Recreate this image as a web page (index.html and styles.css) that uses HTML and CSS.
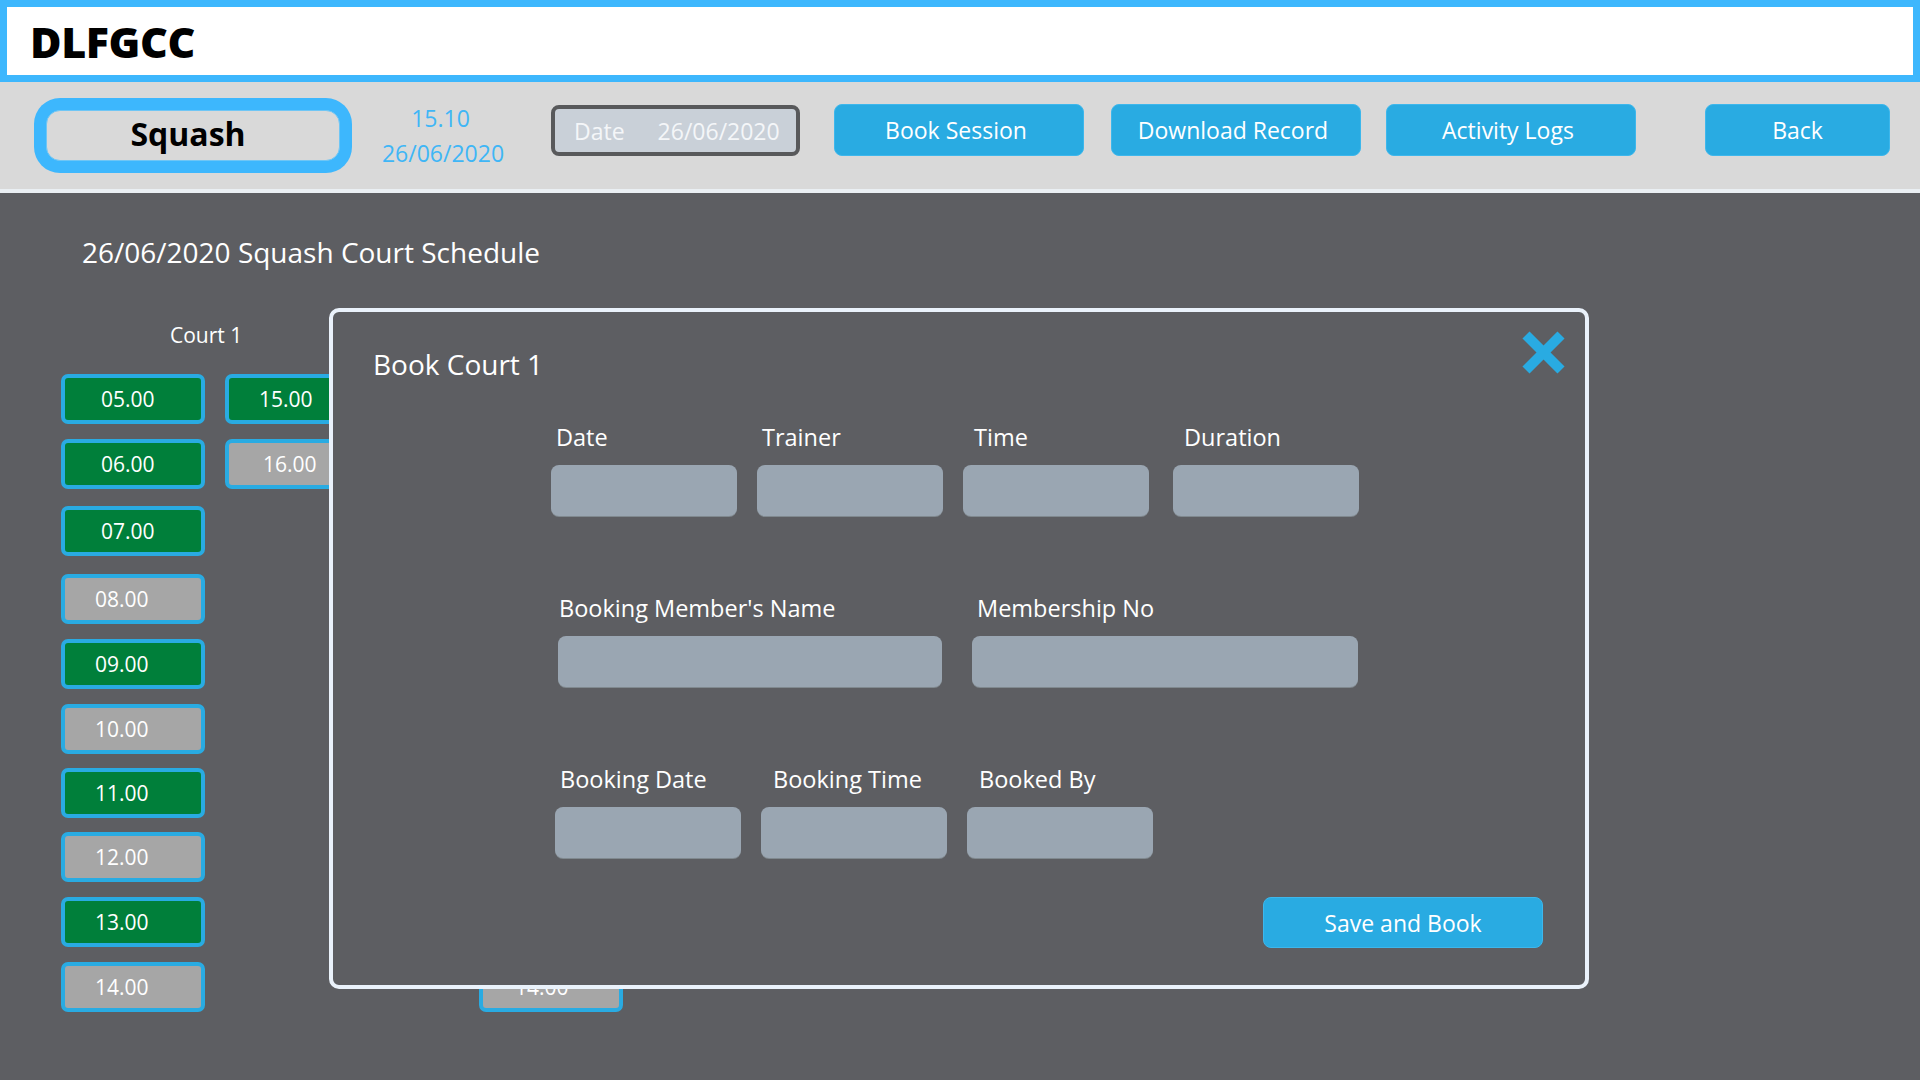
FILE: index.html
```html
<!DOCTYPE html>
<html lang="en">
<head>
<meta charset="utf-8">
<title>DLFGCC - Squash Court Schedule</title>
<link rel="stylesheet" href="styles.css">
</head>
<body>
<header class="topbar">
  <h1 class="brand">DLFGCC</h1>
</header>
<nav class="toolbar">
  <div class="sport"><div class="sport-inner">Squash</div></div>
  <div class="clock"><div class="clock-time">15.10</div><div>26/06/2020</div></div>
  <div class="datebox"><span class="date-label">Date</span><span class="date-value">26/06/2020</span></div>
  <button class="btn btn-book">Book Session</button>
  <button class="btn btn-download">Download Record</button>
  <button class="btn btn-logs">Activity Logs</button>
  <button class="btn btn-back">Back</button>
</nav>
<main class="main">
  <h2 class="schedule-title">26/06/2020 Squash Court Schedule</h2>
  <div class="courts">
    <section class="court">
      <div class="court-name">Court 1</div>
      <div class="court-cols">
        <div class="slot-col">
          <div class="slot free indent-lg">05.00</div>
          <div class="slot free indent-lg">06.00</div>
          <div class="slot free indent-lg step-2">07.00</div>
          <div class="slot busy step-3">08.00</div>
          <div class="slot free">09.00</div>
          <div class="slot busy">10.00</div>
          <div class="slot free step-n1">11.00</div>
          <div class="slot busy step-n1">12.00</div>
          <div class="slot free">13.00</div>
          <div class="slot busy">14.00</div>
        </div>
        <div class="slot-col">
          <div class="slot free">15.00</div>
          <div class="slot busy indent-md">16.00</div>
        </div>
      </div>
    </section>
    <section class="court court-second">
      <div class="court-name"></div>
      <div class="court-cols">
        <div class="slot-col">
          <div class="slot free"></div>
          <div class="slot free"></div>
          <div class="slot busy step-2"></div>
          <div class="slot free step-3"></div>
          <div class="slot free"></div>
          <div class="slot busy"></div>
          <div class="slot free step-n1"></div>
          <div class="slot free step-n1"></div>
          <div class="slot busy"></div>
          <div class="slot busy indent-sm">14.00</div>
        </div>
      </div>
    </section>
  </div>

  <div class="modal">
    <h3 class="modal-title">Book Court 1</h3>
    <button class="close" aria-label="Close">
      <svg width="43" height="43" viewBox="0 0 43 43"><line x1="4" y1="4" x2="39" y2="39" stroke="#29abe2" stroke-width="10"/><line x1="39" y1="4" x2="4" y2="39" stroke="#29abe2" stroke-width="10"/></svg>
    </button>
    <div class="form-row row-one">
      <div class="field"><label class="field-label">Date</label><div class="input small"></div></div>
      <div class="field"><label class="field-label">Trainer</label><div class="input small"></div></div>
      <div class="field"><label class="field-label lbl-time">Time</label><div class="input small"></div></div>
      <div class="field field-duration"><label class="field-label lbl-duration">Duration</label><div class="input small"></div></div>
    </div>
    <div class="form-row row-two">
      <div class="field"><label class="field-label">Booking Member's Name</label><div class="input wide"></div></div>
      <div class="field"><label class="field-label">Membership No</label><div class="input wider"></div></div>
    </div>
    <div class="form-row row-three">
      <div class="field"><label class="field-label">Booking Date</label><div class="input small"></div></div>
      <div class="field"><label class="field-label lbl-btime">Booking Time</label><div class="input small"></div></div>
      <div class="field"><label class="field-label lbl-btime">Booked By</label><div class="input small"></div></div>
    </div>
    <div class="actions">
      <button class="btn btn-save">Save and Book</button>
    </div>
  </div>
</main>
</body>
</html>
```
FILE: styles.css
```css
* { box-sizing: border-box; }
html, body { margin: 0; padding: 0; }
body {
  width: 1920px;
  height: 1080px;
  overflow: hidden;
  background: #5d5e62;
  font-family: "Open Sans", "Liberation Sans", sans-serif;
  color: #fff;
}

/* header */
.topbar {
  height: 82px;
  background: #fff;
  border: 7px solid #3db7fd;
  display: flex;
  align-items: center;
  padding-left: 23px;
}
.brand {
  margin: 0;
  font-size: 43px;
  font-weight: 800;
  color: #000;
  letter-spacing: -0.4px;
  line-height: 1;
}

/* toolbar */
.toolbar {
  height: 111px;
  background: #d9d9d9;
  border-bottom: 4px solid #eaeff3;
  display: flex;
  align-items: flex-start;
  padding-left: 34px;
}
.sport {
  margin-top: 16px;
  width: 318px;
  height: 75px;
  background: #3db7fd;
  border-radius: 26px;
  padding: 12px;
}
.sport-inner {
  height: 100%;
  background: #d9d9d9;
  border-radius: 14px;
  border: 1px solid #6fc6f5;
  display: flex;
  align-items: center;
  justify-content: center;
  padding: 0 10px 5px 0;
  font-size: 32px;
  font-weight: 700;
  color: #000;
}
.clock {
  margin-top: 19px;
  margin-left: 26px;
  width: 130px;
  text-align: center;
  color: #3fb6f6;
  font-size: 23px;
  line-height: 35px;
}
.clock-time { padding-right: 5px; }
.datebox {
  margin-top: 23px;
  margin-left: 43px;
  width: 249px;
  height: 51px;
  background: #c9d0d8;
  border: 4px solid #58595b;
  border-radius: 8px;
  display: flex;
  align-items: center;
  padding-left: 19px;
  font-size: 23px;
  color: #f4f6f8;
}
.date-value { margin-left: 33px; }
.btn {
  font-family: inherit;
  background: #29abe2;
  color: #fff;
  border: 1px solid #3db7ec;
  border-radius: 8px;
  font-size: 23px;
  padding: 0;
  cursor: pointer;
}
.toolbar .btn { margin-top: 22px; height: 52px; width: 250px; }
.btn-book { margin-left: 34px; }
.toolbar .btn-book { padding-right: 6px; }
.btn-download { margin-left: 27px; }
.toolbar .btn-download { padding-right: 6px; }
.btn-logs { margin-left: 25px; }
.toolbar .btn-logs { padding-right: 6px; }
.toolbar .btn-back { margin-left: 69px; width: 185px; }

/* main */
.main {
  position: relative;
  height: 887px;
  padding-top: 40px;
}
.schedule-title {
  margin: 0 0 0 82px;
  font-size: 28px;
  font-weight: 400;
  line-height: 38px;
}
.courts {
  display: flex;
  padding-left: 61px;
  margin-top: 49px;
}
.court-second { margin-left: 110px; }
.court-name {
  height: 30px;
  font-size: 21px;
  line-height: 30px;
  padding-left: 109px;
}
.court-cols {
  display: flex;
  gap: 20px;
  margin-top: 24px;
}
.slot-col {
  display: flex;
  flex-direction: column;
  gap: 15px;
}
.slot {
  width: 144px;
  height: 50px;
  border: 4px solid #29abe2;
  border-radius: 7px;
  display: flex;
  align-items: center;
  padding-left: 30px;
  font-size: 21px;
  color: #fff;
}
.slot.free { background: #007f3a; }
.slot.busy { background: #a6a6a6; }
.slot.indent-lg { padding-left: 36px; }
.slot.indent-md { padding-left: 34px; }
.slot.indent-sm { padding-left: 32px; }
.slot.step-2 { margin-top: 2px; }
.slot.step-3 { margin-top: 3px; }
.slot.step-n1 { margin-top: -1px; }

/* modal */
.modal {
  position: absolute;
  left: 329px;
  top: 115px;
  width: 1260px;
  height: 681px;
  background: #5d5e62;
  border: 4px solid #eaf2fb;
  border-radius: 10px;
  padding: 33px 42px 0 40px;
}
.modal-title {
  margin: 0;
  font-size: 28px;
  font-weight: 400;
  line-height: 38px;
}
.close {
  position: absolute;
  top: 19px;
  right: 20px;
  width: 43px;
  height: 43px;
  padding: 0;
  border: 0;
  background: none;
  cursor: pointer;
}
.close svg { display: block; }
.form-row { display: flex; }
.field { display: flex; flex-direction: column; }
.field-label {
  font-size: 23.5px;
  line-height: 31px;
  padding-left: 5px;
  margin-bottom: 12px;
}
.input {
  height: 51px;
  background: #9aa6b2;
  border-radius: 8px;
  box-shadow: 0 1px 0 #80898f;
}
.input.small { width: 186px; }
.input.wide { width: 384px; }
.input.wider { width: 386px; }

.row-one { margin-top: 39px; margin-left: 178px; gap: 20px; }
.row-one .field-duration { margin-left: 4px; }
.lbl-time, .lbl-duration { padding-left: 11px; }
.row-two { margin-top: 77px; margin-left: 185px; gap: 30px; }
.row-two .field-label { padding-left: 1px; }
.row-two .field + .field .field-label { padding-left: 5px; }
.row-three { margin-top: 77px; margin-left: 182px; gap: 20px; }
.lbl-btime { padding-left: 12px; }

.actions {
  display: flex;
  justify-content: flex-end;
  margin-top: 39px;
}
.btn-save {
  width: 280px;
  height: 51px;
  font-size: 23px;
}
```
